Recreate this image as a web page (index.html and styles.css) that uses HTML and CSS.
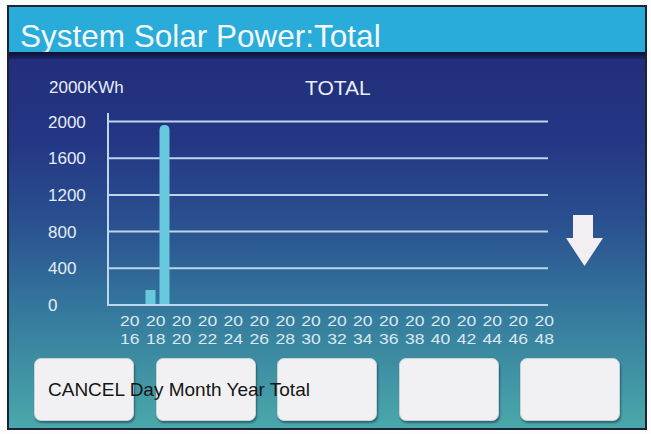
FILE: index.html
```html
<!DOCTYPE html>
<html>
<head>
    <title>System Solar Power</title>
    <link rel="stylesheet" href="styles.css">
</head>
<body>
    <div class="screen">
        <div class="title">System Solar Power:Total</div>
        <div class="title-edge"></div>
        <div class="panel">
            <div class="head">
                <span class="unit">2000KWh</span>
                <span class="mode">TOTAL</span>
            </div>

            <div class="chart-row">
                <!-- plot drawn in screen coordinates -->
                <svg class="chart" width="520" height="240" viewBox="40 108 520 240">
                    <g class="grid">
                        <line x1="108" y1="121.5" x2="548" y2="121.5"/>
                        <line x1="108" y1="158.2" x2="548" y2="158.2"/>
                        <line x1="108" y1="194.9" x2="548" y2="194.9"/>
                        <line x1="108" y1="231.6" x2="548" y2="231.6"/>
                        <line x1="108" y1="268.3" x2="548" y2="268.3"/>
                        <line x1="107" y1="305" x2="548" y2="305"/>
                        <line x1="108" y1="113" x2="108" y2="305"/>
                    </g>
                    <g class="ylabels">
                        <text x="48" y="127.5">2000</text>
                        <text x="48" y="164.2">1600</text>
                        <text x="48" y="200.9">1200</text>
                        <text x="48" y="237.6">800</text>
                        <text x="48" y="274.3">400</text>
                        <text x="48" y="311">0</text>
                    </g>
                    <rect class="bar" x="145.5" y="290" width="10" height="14"/>
                    <path class="bar" d="M159.5 304 V130 Q159.5 125 164.5 125 Q169.5 125 169.5 130 V304 Z"/>
                    <g class="xlabels" id="xlabels"></g>
                </svg>
                <svg class="arrow" width="38" height="52" viewBox="0 0 38 52">
                    <polygon points="7,0 27,0 27,23 37,23 18.5,51 0,23 7,23"/>
                </svg>
            </div>

            <div class="keys">
                <div class="key"><span class="caption">CANCEL Day Month Year Total</span></div>
                <div class="key"></div>
                <div class="key"></div>
                <div class="key"></div>
                <div class="key"></div>
            </div>
        </div>
    </div>

    <script>
        // year ticks 2016..2048, split as "20" over "16"
        var g = document.getElementById('xlabels');
        var ns = 'http://www.w3.org/2000/svg';
        function tick(x, y, s) {
            var t = document.createElementNS(ns, 'text');
            t.setAttribute('x', x);
            t.setAttribute('y', y);
            t.setAttribute('textLength', 19.5);
            t.setAttribute('lengthAdjust', 'spacingAndGlyphs');
            t.textContent = s;
            g.appendChild(t);
        }
        for (var i = 0; i < 17; i++) {
            var yr = 2016 + i * 2;
            var x = 120 + i * 25.9;
            tick(x, 326, '20');
            tick(x, 344, String(yr).slice(2));
        }
    </script>
</body>
</html>
```

FILE: styles.css
```css
body { margin: 0; background: #fdfdfd; font-family: "Liberation Sans", Arial, sans-serif; }
.screen { width: 640px; height: 425px; margin: 5px 0 0 7px; box-sizing: border-box; border: 2px solid #1b2436; display: flex; flex-direction: column; overflow: hidden; }
.title { height: 45px; box-sizing: border-box; padding: 12px 0 0 11px; line-height: 34px; font-size: 31.5px; color: #f3f8fb; background: #29acd9; white-space: nowrap; }
.title-edge { height: 7px; background: linear-gradient(#0b1030, #1d2668); }
.panel { flex: 1; display: flex; flex-direction: column; background: linear-gradient(#222e7b 0%, #243684 22%, #2a5190 45%, #357c9e 70%, #4aa8aa 100%); }

.head { display: flex; margin-top: 19px; height: 20px; line-height: 20px; padding-left: 40px; color: #e8eef8; }
.unit { width: 256px; font-size: 17px; }
.mode { font-size: 21px; }

.chart-row { display: flex; margin-top: 10px; }
.chart { margin-left: 31px; overflow: visible; }
.grid line { stroke: #bcd6ec; stroke-width: 2; }
.ylabels text { font-size: 17px; fill: #e4ecf6; font-family: "Liberation Sans", Arial, sans-serif; }
.xlabels text { font-size: 15.5px; fill: #dce8f0; font-family: "Liberation Sans", Arial, sans-serif; }
.bar { fill: #68c8de; }
.arrow { margin: 107px 0 0 6px; }
.arrow polygon { fill: #f2eef1; }

.keys { display: flex; gap: 21.5px; margin-top: 10px; padding-left: 25px; }
.key { width: 100px; height: 63px; box-sizing: border-box; background: #f1f1f4; border: 1px solid #c9d2d6; border-radius: 7px; box-shadow: 1px 2px 2px rgba(10, 30, 50, 0.45); display: flex; align-items: center; }
.caption { position: relative; z-index: 1; padding-left: 13px; font-size: 19px; color: #151515; white-space: nowrap; }
```
